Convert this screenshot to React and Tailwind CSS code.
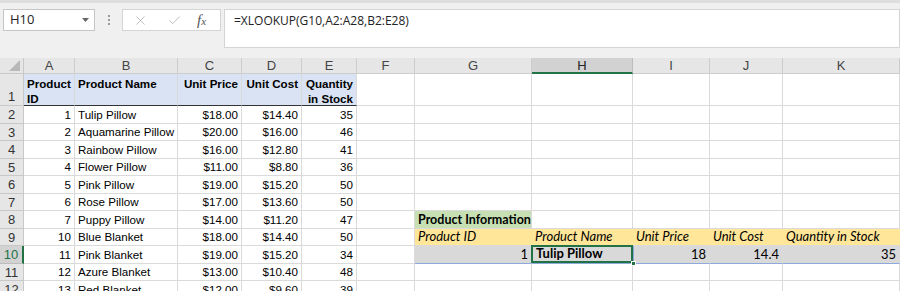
import { X, Check } from "lucide-react";

const cols = [
  { k: "A", w: "w-[51px]" },
  { k: "B", w: "w-[103px]" },
  { k: "C", w: "w-[64px]" },
  { k: "D", w: "w-[60px]" },
  { k: "E", w: "w-[55px]" },
  { k: "F", w: "w-[58px]" },
  { k: "G", w: "w-[117px]" },
  { k: "H", w: "w-[101px]" },
  { k: "I", w: "w-[77px]" },
  { k: "J", w: "w-[73px]" },
  { k: "K", w: "w-[117px]" },
];

const products = [
  [1, "Tulip Pillow", "$18.00", "$14.40", 35],
  [2, "Aquamarine Pillow", "$20.00", "$16.00", 46],
  [3, "Rainbow Pillow", "$16.00", "$12.80", 41],
  [4, "Flower Pillow", "$11.00", "$8.80", 36],
  [5, "Pink Pillow", "$19.00", "$15.20", 50],
  [6, "Rose Pillow", "$17.00", "$13.60", 50],
  [7, "Puppy Pillow", "$14.00", "$11.20", 47],
  [10, "Blue Blanket", "$18.00", "$14.40", 50],
  [11, "Pink Blanket", "$19.00", "$15.20", 34],
  [12, "Azure Blanket", "$13.00", "$10.40", 48],
  [13, "Red Blanket", "$12.00", "$9.60", 39],
];

const side = "font-['Lato','Liberation_Sans',sans-serif] text-[13px]";

function Cell({ w, className = "", children }) {
  return (
    <div
      className={`${w} shrink-0 h-full border-r border-b border-[#dadada] px-[3px] flex items-end pb-[1px] leading-[15px] overflow-hidden whitespace-nowrap ${className}`}
    >
      {children}
    </div>
  );
}

// header cell of row 1: two text lines, top and bottom
function HeadCell({ w, top, bottom, right }) {
  return (
    <div
      className={`${w} shrink-0 h-full bg-[#dae3f3] border-r border-[#dadada] border-b border-b-[#333] px-[3px] pt-[2px] flex flex-col font-bold leading-[15px] whitespace-nowrap overflow-hidden ${
        right ? "items-end" : "items-start"
      }`}
    >
      <span>{top}</span>
      <span>{bottom}</span>
    </div>
  );
}

function rightSide(rowNo) {
  const g = cols[6].w, h = cols[7].w, i = cols[8].w, j = cols[9].w, k = cols[10].w;
  if (rowNo === 8)
    return (
      <>
        <Cell w={g} className="bg-[#c6e0b4] font-bold font-['Lato','Liberation_Sans',sans-serif] text-[12.5px]">
          Product Information
        </Cell>
        <Cell w={h} />
        <Cell w={i} />
        <Cell w={j} />
        <Cell w={k} />
      </>
    );
  if (rowNo === 9) {
    const y = `bg-[#ffe699] italic border-r-[#ffe699] ${side}`;
    return (
      <>
        <Cell w={g} className={y}>Product ID</Cell>
        <Cell w={h} className={y}>Product Name</Cell>
        <Cell w={i} className={y}>Unit Price</Cell>
        <Cell w={j} className={y}>Unit Cost</Cell>
        <Cell w={k} className={y}>Quantity in Stock</Cell>
      </>
    );
  }
  if (rowNo === 10) {
    const gr = `bg-[#d9d9d9] border-b-[#8eaadb] border-r-[#d9d9d9] justify-end ${side}`;
    return (
      <>
        <Cell w={g} className={gr}>1</Cell>
        <div className={`${h} shrink-0 h-full relative bg-[#d9d9d9] border-b border-[#8eaadb]`}>
          <div className={`absolute -left-[1px] -top-[1px] right-0 bottom-0 border-2 border-[#217346] px-[3px] flex items-end leading-[15px] font-bold ${side}`}>
            Tulip Pillow
          </div>
          <div className="absolute -right-[3px] -bottom-[3px] w-[5px] h-[5px] bg-[#217346] border border-white" />
        </div>
        <Cell w={i} className={`${gr} border-l border-l-[#8eaadb]`}>18</Cell>
        <Cell w={j} className={gr}>14.4</Cell>
        <Cell w={k} className={gr}>35</Cell>
      </>
    );
  }
  return (
    <>
      <Cell w={g} />
      <Cell w={h} />
      <Cell w={i} />
      <Cell w={j} />
      <Cell w={k} />
    </>
  );
}

function RowHeader({ n, active, tall }) {
  return (
    <div
      className={`w-[24px] shrink-0 h-full flex justify-center border-b border-r ${
        tall ? "items-end pb-[1px]" : "items-center"
      } ${
        active
          ? "bg-[#d2d2d2] text-[#217346] border-r-2 border-r-[#217346] border-b-[#bdbdbd]"
          : "bg-[#e6e6e6] text-[#333] border-[#c8c8c8]"
      } text-[13px] leading-[15px]`}
    >
      {n}
    </div>
  );
}

export default function App() {
  return (
    <div className="w-[900px] h-[291px] overflow-hidden bg-white font-['Liberation_Sans',Arial,sans-serif] text-[11.6px] text-black">
      {/* formula bar */}
      <div className="h-[58px] bg-[#f0f0f0] border-t-[3px] border-[#dedede] relative flex items-start pt-[6px] pl-[3px]">
        <div className="w-[92px] h-[22px] bg-white border border-[#c6c6c6] flex items-center justify-between pl-[6px] pr-[5px] font-['Open_Sans',sans-serif] text-[13px] text-[#222]">
          <span>H10</span>
          <svg width="7" height="4" viewBox="0 0 7 4">
            <path d="M0 0h7L3.5 4z" fill="#666" />
          </svg>
        </div>
        <div className="w-[27px] h-[22px] flex flex-col items-center justify-center gap-[2px]">
          <span className="w-[2px] h-[2px] bg-[#9a9a9a]" />
          <span className="w-[2px] h-[2px] bg-[#9a9a9a]" />
          <span className="w-[2px] h-[2px] bg-[#9a9a9a]" />
        </div>
        <div className="w-[99px] h-[22px] bg-white border border-[#d4d4d4] flex items-center pl-[10px] text-[#a8a8a8]">
          <X size={15} strokeWidth={1.2} />
          <Check size={15} strokeWidth={1.2} className="ml-[19px]" />
          <span className="ml-[15px] font-['Liberation_Serif',serif] italic text-[15px] text-[#555]">
            f<span className="text-[11px]">x</span>
          </span>
        </div>
        <div className="ml-[3px] flex-1 h-[39px] bg-white border border-[#d4d4d4] pl-[9px] pt-[2px] font-['Open_Sans',sans-serif] text-[12px] text-[#222]">
          =XLOOKUP(G10,A2:A28,B2:E28)
        </div>
      </div>

      {/* column headers */}
      <div className="flex h-[16px] bg-[#e6e6e6] text-[#444] text-[13px] leading-[15px]">
        <div className="w-[24px] shrink-0 h-full border-r border-b border-[#c8c8c8] relative">
          <svg className="absolute right-[3px] bottom-[2px]" width="11" height="11" viewBox="0 0 11 11">
            <path d="M11 0V11H0z" fill="#b8b8b8" />
          </svg>
        </div>
        {cols.map((c) =>
          c.k === "H" ? (
            <div
              key={c.k}
              className={`${c.w} shrink-0 h-full flex justify-center bg-[#d2d2d2] border-r border-[#bdbdbd] border-b-2 border-b-[#217346] text-[#222]`}
            >
              {c.k}
            </div>
          ) : (
            <div key={c.k} className={`${c.w} shrink-0 h-full flex justify-center border-r border-b border-[#cdcdcd]`}>
              {c.k}
            </div>
          )
        )}
      </div>

      {/* row 1 */}
      <div className="flex h-[32px]">
        <RowHeader n={1} tall />
        <HeadCell w={cols[0].w} top="Product" bottom="ID" />
        <HeadCell w={cols[1].w} top="Product Name" />
        <HeadCell w={cols[2].w} top="Unit Price" right />
        <HeadCell w={cols[3].w} top="Unit Cost" right />
        <HeadCell w={cols[4].w} top="Quantity" bottom="in Stock" right />
        <Cell w={cols[5].w} />
        {rightSide(1)}
      </div>

      {/* data rows, heights alternate so they average out like the zoomed sheet */}
      {products.map((p, idx) => {
        const n = idx + 2;
        return (
          <div key={n} className={`flex ${idx % 2 === 0 ? "h-[18px]" : "h-[17px]"}`}>
            <RowHeader n={n} active={n === 10} />
            <Cell w={cols[0].w} className="justify-end">{p[0]}</Cell>
            <Cell w={cols[1].w}>{p[1]}</Cell>
            <Cell w={cols[2].w} className="justify-end">{p[2]}</Cell>
            <Cell w={cols[3].w} className="justify-end">{p[3]}</Cell>
            <Cell w={cols[4].w} className="justify-end">{p[4]}</Cell>
            <Cell w={cols[5].w} />
            {rightSide(n)}
          </div>
        );
      })}
    </div>
  );
}
